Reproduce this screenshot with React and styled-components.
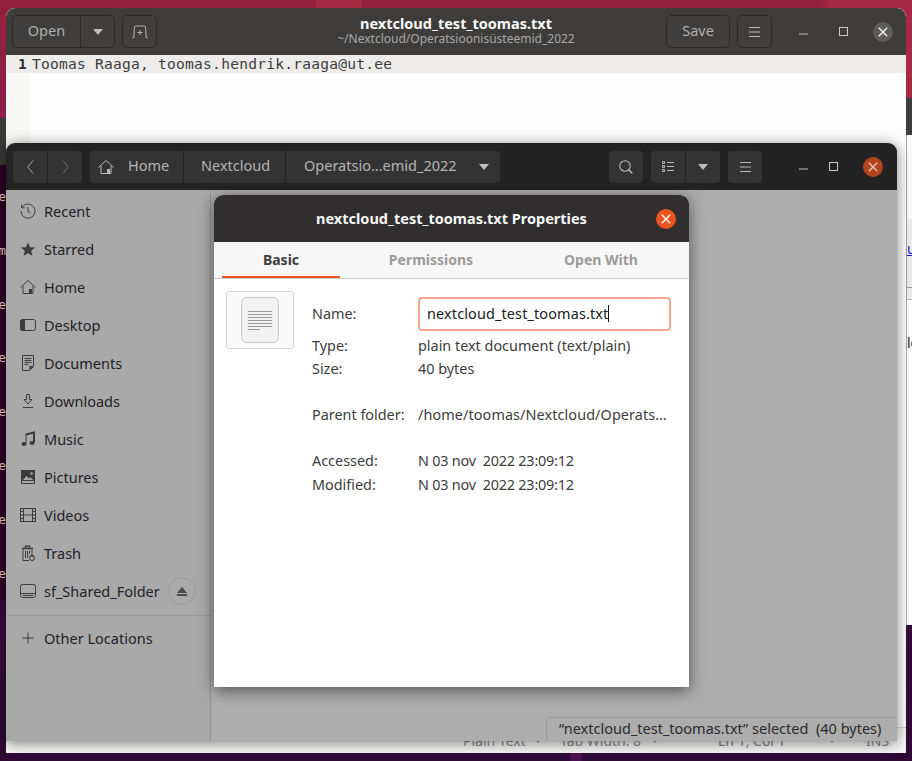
import React from 'react';
import styled, { createGlobalStyle } from 'styled-components';

const UI_FONT = '"Noto Sans", "Open Sans", sans-serif';

const GlobalStyle = createGlobalStyle`
  html, body {
    margin: 0;
    padding: 0;
    background: #2c0a30;
    font-family: ${UI_FONT};
  }
`;

const Desktop = styled.div`
  position: relative;
  width: 912px;
  height: 761px;
  overflow: hidden;
  background:
    linear-gradient(90deg, transparent 316px, #a62a44 316px 362px, transparent 362px) 0 0 / 100% 8px no-repeat,
    linear-gradient(90deg, transparent 820px, #a72a45 830px) 0 0 / 100% 98px no-repeat,
    linear-gradient(90deg, transparent 568px, #4b1052 572px 580px, transparent 584px) 0 100% / 100% 8px no-repeat,
    linear-gradient(180deg, #94203c 0%, #8c1f48 13%, #6b1a48 45%, #380c3c 79%, #2c0a33 100%);
`;

/* windows sit on a free canvas, so the desktop places them absolutely */
const TerminalBack = styled.div`
  position: absolute;
  left: 0;
  top: 118px;
  width: 6px;
  height: 482px;
  overflow: hidden;
  background: #2c0325;
  color: #e8d4d4;
  font: 13px/13px "DejaVu Sans Mono", monospace;
`;

const TerminalHead = styled.div`
  height: ${({ $h }) => $h}px;
  background: ${({ $bg }) => $bg};
`;

const TerminalLine = styled.div`
  height: 53.8px;
  display: flex;
  justify-content: flex-end;
  align-items: flex-start;
`;

const BrowserBack = styled.div`
  position: absolute;
  right: 0;
  top: 98px;
  width: 6px;
  height: 527px;
  background: #fff;
  display: flex;
  flex-direction: column;
  overflow: hidden;
`;

const BrowserBar = styled.div`
  box-sizing: border-box;
  height: ${({ $h }) => $h}px;
  background: ${({ $bg }) => $bg || 'transparent'};
  border-bottom: ${({ $line }) => ($line ? `1px solid ${$line}` : 'none')};
  border-left: ${({ $edge }) => ($edge ? '1px solid #a8a8a8' : 'none')};
  flex: none;
  overflow: hidden;
  white-space: nowrap;
  font-size: 14px;
  line-height: 16px;
  padding-top: ${({ $pt }) => $pt || 0}px;
  color: #222;
`;

const BrowserLink = styled.span`
  color: #1a1aee;
  text-decoration: underline;
`;

const EditorWindow = styled.div`
  position: absolute;
  left: 6px;
  top: 8px;
  width: 900px;
  height: 745px;
  display: flex;
  flex-direction: column;
  background: #fdfdfd;
  border-radius: 9px 9px 0 0;
  overflow: hidden;
`;

const HeaderBar = styled.div`
  position: relative;
  flex: none;
  height: ${({ $h }) => $h}px;
  background: ${({ $bg }) => $bg};
  border-radius: 9px 9px 0 0;
  display: flex;
  align-items: center;
  box-sizing: border-box;
`;

const ToolButton = styled.div`
  box-sizing: border-box;
  width: ${({ $w }) => $w}px;
  height: ${({ $h }) => $h || 33}px;
  flex: none;
  display: flex;
  align-items: center;
  justify-content: center;
  font-size: 14.5px;
  color: #b0afad;
  padding-bottom: ${({ $label }) => ($label ? 3 : 0)}px;
  background: ${({ $bg }) => $bg || '#3f3e3c'};
  border: ${({ $flat }) => ($flat ? 'none' : '1px solid #2b2a29')};
  border-radius: ${({ $radius }) => $radius || '5px'};
  margin-left: ${({ $ml }) => $ml || 0}px;
`;

const WinControls = styled.div`
  margin-left: auto;
  padding-right: ${({ $right }) => $right}px;
  display: flex;
  align-items: center;
`;

const WinControl = styled.div`
  width: 20px;
  height: 20px;
  margin-left: ${({ $ml }) => $ml || 0}px;
  display: flex;
  align-items: center;
  justify-content: center;
  border-radius: 50%;
  background: ${({ $bg }) => $bg || 'transparent'};
`;

const TitleBlock = styled.div`
  position: absolute;
  left: 0;
  right: 0;
  top: 7px;
  text-align: center;
  color: #a9a8a6;
  font-size: 12px;
  line-height: 16px;
`;

const TitleMain = styled.div`
  color: #fbfbfb;
  font-size: 14.5px;
  font-weight: 700;
  line-height: 16px;
`;

const LineRow = styled.div`
  flex: none;
  height: 18px;
  background: #edecea;
  display: flex;
  align-items: center;
  font: 14.6px/18px "DejaVu Sans Mono", monospace;
  letter-spacing: 0.22px;
  color: #3d3d3d;
`;

const LineNumber = styled.span`
  width: 21px;
  margin-right: 5px;
  text-align: right;
  font-weight: 700;
  color: #2e2e2e;
`;

const EditorBody = styled.div`
  flex: 1;
  display: flex;
`;

const Gutter = styled.div`
  width: 24px;
  background: #f7f7f6;
`;

const EditorStatus = styled.div`
  flex: none;
  height: 26px;
  box-sizing: border-box;
  padding-left: 457px;
  border-top: 1px solid #d0cfcd;
  background: #f6f6f5;
  color: #8a8a88;
  font-size: 14px;
  display: flex;
  align-items: center;
`;

const StatusItem = styled.span`
  flex: none;
  width: ${({ $w }) => $w}px;
  white-space: nowrap;
`;

const FilesWindow = styled.div`
  position: absolute;
  left: 6px;
  top: 143px;
  width: 891px;
  height: 598px;
  display: flex;
  flex-direction: column;
  background: #adadad;
  border-radius: 9px 9px 0 0;
  box-shadow: 0 2px 14px rgba(0, 0, 0, 0.5);
`;

const HeaderInner = styled.div`
  display: flex;
  align-items: center;
  padding-left: 7px;
`;

const PathBar = styled.div`
  display: flex;
  margin-left: 8px;
`;

const PathCrumb = styled.div`
  box-sizing: border-box;
  height: 32px;
  width: ${({ $w }) => $w}px;
  display: flex;
  align-items: center;
  padding-left: ${({ $pad }) => $pad || 0}px;
  gap: 14px;
  background: #333;
  color: #b4b4b4;
  font-size: 14.5px;
  border-right: ${({ $last }) => ($last ? 'none' : '1px solid #232323')};
  border-radius: ${({ $first, $last }) =>
    $first ? '4px 0 0 4px' : $last ? '0 4px 4px 0' : '0'};
`;

const CrumbLabel = styled.span`
  padding-bottom: 3px;
`;

const CrumbArrow = styled.span`
  margin-left: auto;
  padding-right: 11px;
`;

const FilesBody = styled.div`
  flex: 1;
  display: flex;
  min-height: 0;
`;

const Sidebar = styled.nav`
  flex: none;
  width: 205px;
  box-sizing: border-box;
  padding-top: 2px;
  background: #a9a9a9;
  border-right: 1px solid #949494;
`;

const SideRow = styled.div`
  height: 38px;
  display: flex;
  align-items: center;
  padding-left: 14px;
  gap: 8px;
  color: #1f2126;
  font-size: 14.5px;
`;

const SideIcon = styled.span`
  width: 16px;
  height: 16px;
  display: flex;
`;

const SideSeparator = styled.div`
  height: 1px;
  margin-top: 5px;
  background: #9a9a9a;
`;

const SideOther = styled(SideRow)`
  height: 44px;
`;

const EjectButton = styled.span`
  box-sizing: border-box;
  width: 28px;
  height: 28px;
  border: 1px solid #999;
  border-radius: 50%;
  display: flex;
  align-items: center;
  justify-content: center;
`;

const FloatingStatus = styled.div`
  position: absolute;
  left: 540px;
  top: 574px;
  width: 350px;
  height: 24px;
  box-sizing: border-box;
  padding: 0 0 3px 12px;
  display: flex;
  align-items: center;
  white-space: pre;
  background: #adadad;
  border: 1px solid #989898;
  border-bottom: none;
  border-right: none;
  border-radius: 5px 0 0 0;
  color: #2b2b2b;
  font-size: 14.5px;
`;

const Dialog = styled.div`
  position: absolute;
  left: 214px;
  top: 195px;
  width: 475px;
  height: 492px;
  display: flex;
  flex-direction: column;
  background: #fff;
  border-radius: 9px 9px 0 0;
  box-shadow: 0 3px 16px rgba(0, 0, 0, 0.55);
`;

const DialogTitle = styled.div`
  flex: 1;
  padding: 0 0 2px 33px;
  text-align: center;
  color: #f8f8f8;
  font-size: 14.5px;
  font-weight: 700;
`;

const Tabs = styled.div`
  flex: none;
  height: 37px;
  box-sizing: border-box;
  padding: 0 8px;
  display: flex;
  background: #f7f7f7;
  border-bottom: 1px solid #cfcfcf;
`;

const Tab = styled.div`
  width: ${({ $w }) => $w}px;
  height: 36px;
  box-sizing: border-box;
  display: flex;
  align-items: center;
  justify-content: center;
  font-size: 14px;
  font-weight: 700;
  color: ${({ $active }) => ($active ? '#3d3d3d' : '#9b9b9b')};
  border-bottom: 2px solid ${({ $active }) => ($active ? '#e95420' : 'transparent')};
  margin-bottom: -1px;
`;

const DialogBody = styled.div`
  flex: 1;
  display: flex;
  padding: 12px 0 0 12px;
  align-items: flex-start;
`;

const BigIcon = styled.div`
  flex: none;
  box-sizing: border-box;
  width: 68px;
  height: 58px;
  margin-right: 18px;
  display: flex;
  align-items: center;
  justify-content: center;
  border: 1px solid #d5d5d5;
  border-radius: 3px;
  background: #fafafa;
`;

const InfoList = styled.div`
  flex: 1;
  padding-top: 6px;
`;

const InfoRow = styled.div`
  height: ${({ $h }) => $h || 23}px;
  margin-top: ${({ $mt }) => $mt || 0}px;
  display: flex;
  align-items: center;
  font-size: 14.4px;
  color: #3d3d3d;
`;

const InfoLabel = styled.span`
  width: 106px;
  flex: none;
  padding-bottom: ${({ $lift }) => ($lift ? 2 : 0)}px;
`;

const InfoValue = styled.span`
  width: 252px;
  white-space: pre;
  overflow: hidden;
  text-overflow: ellipsis;
  letter-spacing: ${({ $spacing }) => $spacing || 0}px;
`;

const NameInput = styled.div`
  box-sizing: border-box;
  width: 253px;
  height: 34px;
  padding: 0 0 2px 7px;
  display: flex;
  align-items: center;
  letter-spacing: 0.15px;
  color: #202020;
  background: #fff;
  border: 2px solid #f4a68f;
  border-radius: 4px;
`;

const Caret = styled.span`
  width: 1px;
  height: 17px;
  background: #111;
`;

const Glyph = styled.svg`
  display: block;
  flex: none;
`;

// all icons below are drawn on the 16px Yaru grid
const Icon = ({ size = 16, color = '#3c3c3c', width = 1, children }) => (
  <Glyph
    width={size}
    height={size}
    viewBox="0 0 16 16"
    fill="none"
    stroke={color}
    strokeWidth={width}
  >
    {children}
  </Glyph>
);

const HomeIcon = ({ color = '#3c3c3c' }) => (
  <Icon color={color}>
    <path d="M.5 8.5 8 1.5l7.5 7M3 7v7.5h10V7" />
    <path d="M9 14.5V10h3v4.5z" fill={color} stroke="none" />
  </Icon>
);

const RecentIcon = () => (
  <Icon>
    <path d="M2.2 4.2A7 7 0 1 1 1 8" />
    <path d="M1.6 1.6v3.2h3.2" />
    <path d="M8 4v4.3l2.4 1.7" />
  </Icon>
);

const StarIcon = () => (
  <Icon>
    <path
      d="M8 1.6 10 6.2l5 .4-3.8 3.3 1.2 4.9L8 12.2l-4.4 2.6 1.2-4.9L1 6.6l5-.4z"
      fill="#3c3c3c"
      stroke="none"
    />
  </Icon>
);

const DesktopIcon = () => (
  <Icon>
    <rect x=".5" y="2.5" width="15" height="11" rx="2" />
    <path d="M.5 4.5a2 2 0 0 1 2-2h2v11h-2a2 2 0 0 1-2-2z" fill="#3c3c3c" />
  </Icon>
);

const DocumentsIcon = () => (
  <Icon>
    <path d="M2.5.5h11v11l-4 4h-7z" />
    <path d="M4.5 3.5h7M4.5 5.5h7M4.5 7.5h7M4.5 9.5h4" />
    <path d="M9.5 15v-4h4z" fill="#3c3c3c" stroke="none" />
  </Icon>
);

const DownloadsIcon = () => (
  <Icon>
    <path d="M6.5 1.5h3v5h2.5L8 11 4 6.5h2.5z" />
    <path d="M3 14.5h10" />
  </Icon>
);

const MusicIcon = () => (
  <Icon>
    <path d="M6 3.5 14 1.5v10" strokeWidth="2" />
    <path d="M6 2.8v10" />
    <ellipse cx="4" cy="13" rx="2.5" ry="2" fill="#3c3c3c" stroke="none" />
    <ellipse cx="12" cy="12" rx="2.5" ry="2" fill="#3c3c3c" stroke="none" />
  </Icon>
);

const PicturesIcon = () => (
  <Icon>
    <rect x="1.5" y="1.5" width="13" height="13" />
    <path d="M2 2h12v10H2z" fill="#3c3c3c" stroke="none" />
    <path d="M3 11l3.5-4 2.5 2.5 1.5-1.2L13 11z" fill="#a9a9a9" stroke="none" />
    <circle cx="11.5" cy="4.5" r="1.2" fill="#a9a9a9" stroke="none" />
  </Icon>
);

const VideosIcon = () => (
  <Icon>
    <rect x=".5" y="1.5" width="15" height="13" />
    <path d="M3.5 1.5v13M12.5 1.5v13M3.5 8h9M.5 4.5h3M.5 8h3M.5 11.5h3M12.5 4.5h3M12.5 8h3M12.5 11.5h3" />
  </Icon>
);

const TrashIcon = () => (
  <Icon>
    <path d="M2 3.5h11M5.5 3V1.2h4V3" strokeWidth="1.4" />
    <path d="M3 4.5v11h6M12 4.5v4M5.5 6v7M7.5 6v7M9.5 6v3" />
    <circle cx="12" cy="13" r="2.5" />
    <path d="M12 8.5 10 11.8h4z" fill="#3c3c3c" stroke="none" />
  </Icon>
);

const DriveIcon = () => (
  <Icon>
    <rect x=".5" y="1.5" width="15" height="13" rx="2" />
    <path d="M.5 10.5h15M2.5 12.5h11" />
  </Icon>
);

const PlusIcon = () => (
  <Icon>
    <path d="M8 2.5v11M2.5 8h11" />
  </Icon>
);

const EjectIcon = () => (
  <Glyph width="10" height="9" viewBox="0 0 10 9">
    <path d="M5 0l5 6H0zM0 7h10v2H0z" fill="#4a4a4a" />
  </Glyph>
);

const MenuIcon = () => (
  <Glyph width="11" height="10" viewBox="0 0 11 10" fill="none" stroke="#b8b8b8">
    <path d="M0 .5h11M0 5h11M0 9.5h11" />
  </Glyph>
);

const ArrowDown = ({ color = '#bdbdbd', w = 10, h = 6 }) => (
  <Glyph width={w} height={h} viewBox="0 0 10 6">
    <path d="M0 0h10L5 6z" fill={color} />
  </Glyph>
);

const CloseMark = ({ color = '#f4f4f4', size = 10 }) => (
  <Glyph width={size} height={size} viewBox="0 0 10 10" fill="none" stroke={color} strokeWidth="1.4">
    <path d="M.8.8l8.4 8.4M9.2.8.8 9.2" />
  </Glyph>
);

const MinimizeMark = () => (
  <Glyph width="9" height="9" viewBox="0 0 9 9" fill="none" stroke="#c0c0c0">
    <path d="M0 7h9" />
  </Glyph>
);

const MaximizeMark = () => (
  <Glyph width="9" height="9" viewBox="0 0 9 9" fill="none" stroke="#c8c8c8">
    <rect x=".5" y=".5" width="8" height="8" />
  </Glyph>
);

const NewTabIcon = () => (
  <Icon color="#b4b3b1">
    <path d="M.5 14h1.2L2.5 3a1 1 0 0 1 1-1h9a1 1 0 0 1 1 1l.8 11h1.2" />
    <path d="M8 6v5M5.5 8.5h5" />
  </Icon>
);

const SearchIcon = () => (
  <Glyph width="14" height="14" viewBox="0 0 14 14" fill="none" stroke="#b8b8b8" strokeWidth="1.1">
    <circle cx="6" cy="6" r="5.3" />
    <path d="M9.8 9.8 13.4 13.4" strokeWidth="1.4" />
  </Glyph>
);

const ChevronLeft = () => (
  <Glyph width="7" height="14" viewBox="0 0 7 14" fill="none" stroke="#a0a0a0">
    <path d="M6 .5.8 7 6 13.5" />
  </Glyph>
);

const ChevronRight = () => (
  <Glyph width="7" height="14" viewBox="0 0 7 14" fill="none" stroke="#6a6a6a">
    <path d="M1 .5 6.2 7 1 13.5" />
  </Glyph>
);

const ListIcon = () => (
  <Glyph width="12" height="11" viewBox="0 0 12 11" fill="none" stroke="#b8b8b8">
    <path d="M.5.5h2v2h-2zM.5 4.5h2v2h-2zM.5 8.5h2v2h-2z" />
    <path d="M5 1.5h7M5 5.5h7M5 9.5h7" />
  </Glyph>
);

const TextFileIcon = () => (
  <Glyph width="38" height="46" viewBox="0 0 38 46" fill="none">
    <rect x=".5" y=".5" width="37" height="45" rx="5" fill="#f2f2f2" stroke="#c8c8c8" />
    <path d="M7 14.5h24M7 17.5h24M7 20.5h24M7 23.5h24M7 26.5h24M7 29.5h24M7 32.5h12" stroke="#9a9a9a" />
  </Glyph>
);

const SIDEBAR_ITEMS = [
  ['Recent', RecentIcon],
  ['Starred', StarIcon],
  ['Home', HomeIcon],
  ['Desktop', DesktopIcon],
  ['Documents', DocumentsIcon],
  ['Downloads', DownloadsIcon],
  ['Music', MusicIcon],
  ['Pictures', PicturesIcon],
  ['Videos', VideosIcon],
  ['Trash', TrashIcon],
];

const TERMINAL_LETTERS = ['e', 'm', 'e', 'e', 'e', 'e', 'e', 'e'];

const App = () => (
  <Desktop>
    <GlobalStyle />

    <TerminalBack>
      <TerminalHead $h={47} $bg="#3b3a39" />
      <TerminalHead $h={25} $bg="transparent" />
      {TERMINAL_LETTERS.map((letter, index) => (
        <TerminalLine key={index}>{letter}</TerminalLine>
      ))}
    </TerminalBack>

    <BrowserBack>
      <BrowserBar $h={37} $bg="#3c3c3a" />
      <BrowserBar $h={84} $bg="#fafafa" $edge />
      <BrowserBar $h={61} $bg="#ececec" $edge $pt={22}><BrowserLink>u</BrowserLink></BrowserBar>
      <BrowserBar $h={8} $bg="#ececec" $edge $line="#9a9a9a" />
      <BrowserBar $h={12} $bg="#ececec" $edge $line="#b8b8b8" />
      <BrowserBar $h={325} $bg="#fff" $edge $pt={35}>lo</BrowserBar>
    </BrowserBack>

    <EditorWindow>
      <HeaderBar $h={47} $bg="#3d3c3a">
        <TitleBlock>
          <TitleMain>nextcloud_test_toomas.txt</TitleMain>
          ~/Nextcloud/Operatsioonisüsteemid_2022
        </TitleBlock>
        <ToolButton $w={69} $ml={6} $radius="5px 0 0 5px" $label>Open</ToolButton>
        <ToolButton $w={35} $ml={-1} $radius="0 5px 5px 0"><ArrowDown /></ToolButton>
        <ToolButton $w={35} $ml={7}><NewTabIcon /></ToolButton>
        <ToolButton $w={64} $ml={509} $label>Save</ToolButton>
        <ToolButton $w={35} $ml={7}><MenuIcon /></ToolButton>
        <WinControls $right={13}>
          <WinControl><MinimizeMark /></WinControl>
          <WinControl $ml={20}><MaximizeMark /></WinControl>
          <WinControl $ml={20} $bg="#5d5c5b"><CloseMark /></WinControl>
        </WinControls>
      </HeaderBar>
      <LineRow>
        <LineNumber>1</LineNumber>
        Toomas Raaga, toomas.hendrik.raaga@ut.ee
      </LineRow>
      <EditorBody>
        <Gutter />
      </EditorBody>
      <EditorStatus>
        <StatusItem $w={72}>Plain Text</StatusItem>
        <StatusItem $w={25}><ArrowDown color="#8a8a88" w={6} h={4} /></StatusItem>
        <StatusItem $w={92}>Tab Width: 8</StatusItem>
        <StatusItem $w={66}><ArrowDown color="#8a8a88" w={6} h={4} /></StatusItem>
        <StatusItem $w={111}>Ln 1, Col 1</StatusItem>
        <StatusItem $w={37}><ArrowDown color="#8a8a88" w={6} h={4} /></StatusItem>
        <StatusItem $w={30}>INS</StatusItem>
      </EditorStatus>
    </EditorWindow>

    <FilesWindow>
      <HeaderBar $h={47} $bg="#242323">
        <HeaderInner>
          <ToolButton $w={34} $h={32} $bg="#333" $flat $radius="4px 0 0 4px"><ChevronLeft /></ToolButton>
          <ToolButton $w={34} $h={32} $bg="#333" $flat $radius="0 4px 4px 0" $ml={1}><ChevronRight /></ToolButton>
          <PathBar>
            <PathCrumb $w={94} $pad={8} $first><HomeIcon color="#b8b8b8" /><CrumbLabel>Home</CrumbLabel></PathCrumb>
            <PathCrumb $w={102} $pad={17}><CrumbLabel>Nextcloud</CrumbLabel></PathCrumb>
            <PathCrumb $w={214} $pad={18} $last>
              <CrumbLabel>Operatsio...emid_2022</CrumbLabel>
              <CrumbArrow><ArrowDown /></CrumbArrow>
            </PathCrumb>
          </PathBar>
          <ToolButton $w={34} $h={32} $bg="#333" $flat $radius="4px" $ml={109}><SearchIcon /></ToolButton>
          <ToolButton $w={34} $h={32} $bg="#333" $flat $radius="4px 0 0 4px" $ml={8}><ListIcon /></ToolButton>
          <ToolButton $w={34} $h={32} $bg="#333" $flat $radius="0 4px 4px 0" $ml={1}><ArrowDown /></ToolButton>
          <ToolButton $w={34} $h={32} $bg="#333" $flat $radius="4px" $ml={8}><MenuIcon /></ToolButton>
        </HeaderInner>
        <WinControls $right={14}>
          <WinControl><MinimizeMark /></WinControl>
          <WinControl $ml={10}><MaximizeMark /></WinControl>
          <WinControl $ml={20} $bg="#b3441c"><CloseMark color="#e8c8bc" /></WinControl>
        </WinControls>
      </HeaderBar>
      <FilesBody>
        <Sidebar>
          {SIDEBAR_ITEMS.map(([label, ItemIcon]) => (
            <SideRow key={label}>
              <SideIcon><ItemIcon /></SideIcon>
              {label}
            </SideRow>
          ))}
          <SideRow>
            <SideIcon><DriveIcon /></SideIcon>
            sf_Shared_Folder
            <EjectButton><EjectIcon /></EjectButton>
          </SideRow>
          <SideSeparator />
          <SideOther>
            <SideIcon><PlusIcon /></SideIcon>
            Other Locations
          </SideOther>
        </Sidebar>
      </FilesBody>
      <FloatingStatus>“nextcloud_test_toomas.txt” selected  (40 bytes)</FloatingStatus>
    </FilesWindow>

    <Dialog>
      <HeaderBar $h={47} $bg="#302e2e">
        <DialogTitle>nextcloud_test_toomas.txt Properties</DialogTitle>
        <WinControls $right={13}>
          <WinControl $bg="#e95420"><CloseMark color="#fff" /></WinControl>
        </WinControls>
      </HeaderBar>
      <Tabs>
        <Tab $w={118} $active>Basic</Tab>
        <Tab $w={182}>Permissions</Tab>
        <Tab $w={158}>Open With</Tab>
      </Tabs>
      <DialogBody>
        <BigIcon><TextFileIcon /></BigIcon>
        <InfoList>
          <InfoRow $h={34}>
            <InfoLabel $lift>Name:</InfoLabel>
            <NameInput>nextcloud_test_toomas.txt<Caret /></NameInput>
          </InfoRow>
          <InfoRow $mt={3}>
            <InfoLabel>Type:</InfoLabel>
            <InfoValue>plain text document (text/plain)</InfoValue>
          </InfoRow>
          <InfoRow>
            <InfoLabel>Size:</InfoLabel>
            <InfoValue>40 bytes</InfoValue>
          </InfoRow>
          <InfoRow $mt={23}>
            <InfoLabel>Parent folder:</InfoLabel>
            <InfoValue $spacing={0.1}>/home/toomas/Nextcloud/Operats…</InfoValue>
          </InfoRow>
          <InfoRow $mt={23}>
            <InfoLabel>Accessed:</InfoLabel>
            <InfoValue $spacing={-0.22}>N 03 nov  2022 23:09:12</InfoValue>
          </InfoRow>
          <InfoRow $mt={1}>
            <InfoLabel>Modified:</InfoLabel>
            <InfoValue $spacing={-0.22}>N 03 nov  2022 23:09:12</InfoValue>
          </InfoRow>
        </InfoList>
      </DialogBody>
    </Dialog>
  </Desktop>
);

export default App;
